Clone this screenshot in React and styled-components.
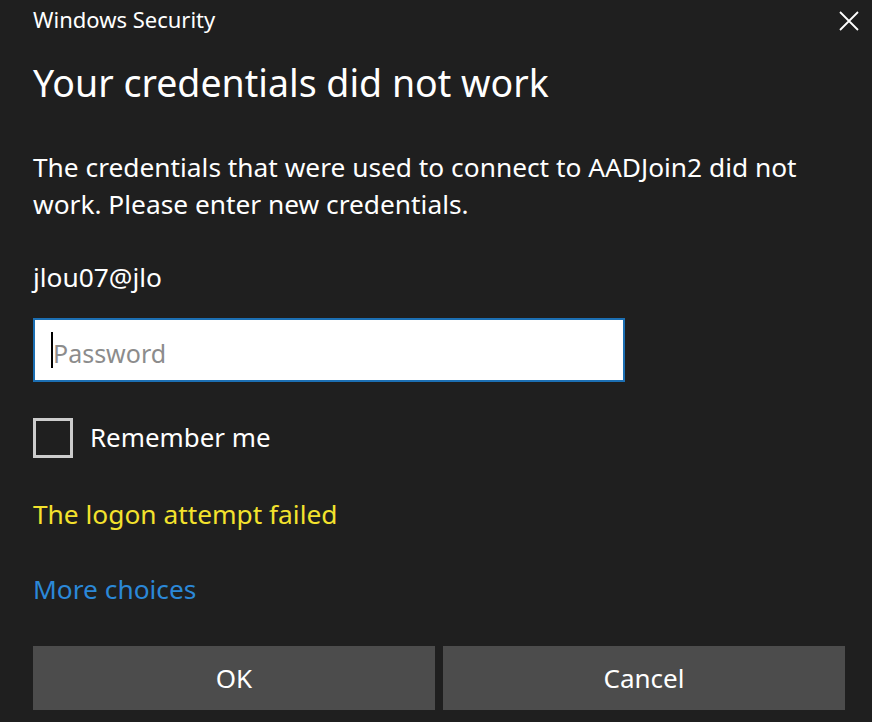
import React from "react";
import styled, { createGlobalStyle } from "styled-components";

const Global = createGlobalStyle`
  html, body { margin: 0; padding: 0; background: #1f1f1f; }
  body { font-family: "Noto Sans", "Open Sans", sans-serif; }
  * { box-sizing: border-box; }
`;

const Dialog = styled.div`
  width: 872px;
  height: 722px;
  background: #1f1f1f;
  color: #ffffff;
  display: flex;
  flex-direction: column;
  padding: 0 27px 0 33px;
  overflow: hidden;
`;

const TitleBar = styled.div`
  height: 44px;
  display: flex;
  justify-content: space-between;
  align-items: flex-start;
  margin-right: -14px;
`;

const WindowTitle = styled.div`
  padding-top: 5px;
  font-size: 22px;
  line-height: 28px;
  color: #ffffff;
`;

const CloseButton = styled.button`
  width: 20px;
  height: 20px;
  margin-top: 11px;
  padding: 0;
  border: none;
  background: transparent;
  display: flex;
  cursor: pointer;
`;

const Heading = styled.h1`
  margin: 15px 0 0;
  font-weight: 400;
  font-size: 37.5px;
  line-height: 48px;
  white-space: nowrap;
`;

const Text = styled.p`
  margin: ${(p) => p.$top}px 0 0;
  font-size: 26.3px;
  line-height: 37px;
  color: ${(p) => p.$color || "#ffffff"};
`;

const Field = styled.div`
  margin-top: 22px;
  width: 592px;
  height: 64px;
  background: #ffffff;
  border: 2px solid #1c6fb3;
  display: flex;
  align-items: center;
  padding-left: 16px;
`;

const Caret = styled.span`
  width: 2px;
  height: 36px;
  background: #000000;
`;

const Placeholder = styled.span`
  padding-top: 6px;
  font-size: 25px;
  color: #8c8c8c;
`;

const CheckRow = styled.label`
  margin-top: 36px;
  height: 40px;
  display: flex;
  align-items: center;
  gap: 17px;
`;

const Box = styled.span`
  width: 40px;
  height: 40px;
  border: 3px solid #cccccc;
`;

const CheckLabel = styled.span`
  padding-bottom: 2px;
  font-size: 25.9px;
  line-height: 37px;
`;

const Buttons = styled.div`
  margin-top: 38px;
  display: grid;
  grid-template-columns: 1fr 1fr;
  gap: 8px;
`;

const Button = styled.button`
  height: 64px;
  border: none;
  background: #4c4c4c;
  color: #ffffff;
  font-family: inherit;
  font-size: 26px;
`;

export default function App() {
  return (
    <>
      <Global />
      <Dialog>
        <TitleBar>
          <WindowTitle>Windows Security</WindowTitle>
          <CloseButton aria-label="Close">
            <svg width="20" height="20" viewBox="0 0 20 20">
              <path d="M1 1 L19 19 M19 1 L1 19" stroke="#ffffff" strokeWidth="1.8" />
            </svg>
          </CloseButton>
        </TitleBar>
        <Heading>Your credentials did not work</Heading>
        <Text $top={42}>
          The credentials that were used to connect to AADJoin2 did not work. Please enter new credentials.
        </Text>
        <Text $top={36}>jlou07@jlo</Text>
        <Field>
          <Caret />
          <Placeholder>Password</Placeholder>
        </Field>
        <CheckRow>
          <Box />
          <CheckLabel>Remember me</CheckLabel>
        </CheckRow>
        <Text $top={38} $color="#f3e22d">The logon attempt failed</Text>
        <Text $top={38} $color="#2b88d8">More choices</Text>
        <Buttons>
          <Button>OK</Button>
          <Button>Cancel</Button>
        </Buttons>
      </Dialog>
    </>
  );
}
